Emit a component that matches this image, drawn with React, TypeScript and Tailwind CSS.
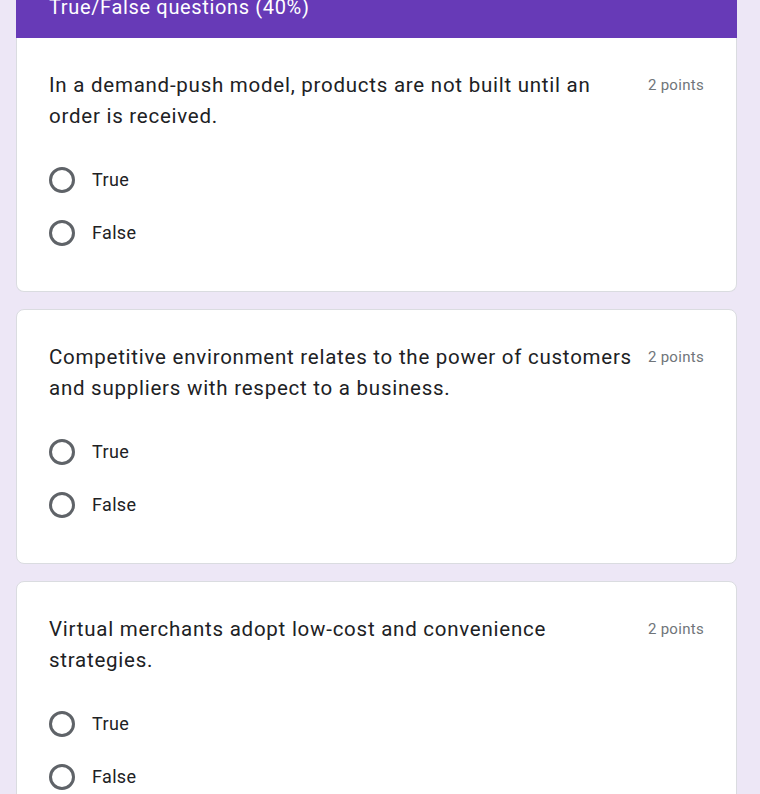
import React from "react";

const questions = [
  "In a demand-push model, products are not built until an order is received.",
  "Competitive environment relates to the power of customers and suppliers with respect to a business.",
  "Virtual merchants adopt low-cost and convenience strategies.",
];

function Radio({ label }: { label: string }) {
  return (
    <div className="flex items-center h-[53px]">
      <span className="w-[26px] h-[26px] rounded-full border-[3px] border-[#5f6368] box-border shrink-0" />
      <span className="ml-[17px] text-[18px] text-[#202124] tracking-[0.35px]">{label}</span>
    </div>
  );
}

function QuestionCard({ text, first }: { text: string; first?: boolean }) {
  return (
    <div
      className={
        first
          ? "bg-white border-x border-b border-[#dadce0] rounded-b-lg pt-[32px] pb-[32px] pl-[32px] pr-[32px]"
          : "bg-white border border-[#dadce0] rounded-lg pt-[32px] pb-[32px] pl-[32px] pr-[32px]"
      }
    >
      <div className="flex items-start">
        <p className="flex-1 text-[20.5px] leading-[31px] text-[#202124] tracking-[0.75px] pr-[12px]">{text}</p>
        <span className="text-[15px] leading-[31px] text-[#70757a] tracking-[0.3px] whitespace-nowrap">2 points</span>
      </div>
      <div className="mt-[21px]">
        <Radio label="True" />
        <Radio label="False" />
      </div>
    </div>
  );
}

export default function App() {
  return (
    <div
      className="min-h-[794px] bg-[#ede7f6] overflow-hidden"
      style={{ fontFamily: "Roboto, 'Liberation Sans', sans-serif" }}
    >
      <div className="ml-[16px] w-[721px] flex flex-col gap-[17px]">
        <div>
          <div className="h-[38px] bg-[#673ab7] overflow-hidden pl-[33px]">
            <div className="-mt-[7px] text-[20px] leading-[28px] text-white tracking-[0.65px]">True/False questions (40%)</div>
          </div>
          <QuestionCard text={questions[0]} first />
        </div>
        <QuestionCard text={questions[1]} />
        <QuestionCard text={questions[2]} />
      </div>
    </div>
  );
}
